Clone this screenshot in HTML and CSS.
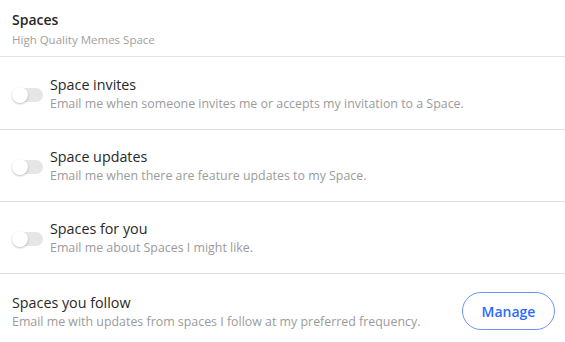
FILE: index.html
```html
<!DOCTYPE html>
<html lang="en">
<head>
    <meta charset="UTF-8">
    <title>Spaces - Email settings</title>
    <link rel="stylesheet" href="styles.css">
</head>
<body>
    <div class="settings">
        <div class="header">
            <div class="title">Spaces</div>
            <div class="subtitle">High Quality Memes Space</div>
        </div>

        <div class="row first">
            <span class="toggle"></span>
            <div class="text">
                <div class="name">Space invites</div>
                <div class="desc">Email me when someone invites me or accepts my invitation to a Space.</div>
            </div>
        </div>

        <div class="row">
            <span class="toggle"></span>
            <div class="text">
                <div class="name">Space updates</div>
                <div class="desc">Email me when there are feature updates to my Space.</div>
            </div>
        </div>

        <div class="row">
            <span class="toggle"></span>
            <div class="text">
                <div class="name">Spaces for you</div>
                <div class="desc">Email me about Spaces I might like.</div>
            </div>
        </div>

        <div class="row last">
            <div class="text">
                <div class="name">Spaces you follow</div>
                <div class="desc">Email me with updates from spaces I follow at my preferred frequency.</div>
            </div>
            <button class="manage">Manage</button>
        </div>
    </div>
</body>
</html>
```

FILE: styles.css
```css
body {
    margin: 0;
    background: #fff;
    font-family: "Open Sans", "Noto Sans", sans-serif;
    color: #282829;
}
.header {
    padding: 10px 12px 8px;
    border-bottom: 1px solid #e2e2e2;
}
.title {
    font-size: 14px;
    line-height: 20px;
    font-weight: 600;
}
.subtitle {
    margin-top: 2px;
    font-size: 11.5px;
    line-height: 16px;
    color: #a0a0a0;
}
.row {
    display: flex;
    align-items: center;
    padding: 17px 10px 17px 12px;
    border-bottom: 1px solid #e2e2e2;
}
.row.first {
    padding-top: 18px;
}
.row.last {
    border-bottom: none;
    padding-top: 18px;
}
.toggle {
    position: relative;
    width: 30px;
    height: 14px;
    margin: 2px 7px 0 1px;
    border-radius: 7px;
    background: #e6e6e6;
    flex-shrink: 0;
}
.toggle::after {
    content: "";
    position: absolute;
    left: -1px;
    top: -1px;
    width: 16px;
    height: 16px;
    border-radius: 50%;
    background: #fff;
    box-shadow: 0 1px 2px rgba(0,0,0,0.25);
}
.text {
    flex: 1;
}
.name {
    font-size: 14.3px;
    line-height: 20px;
}
.desc {
    margin-top: 1px;
    font-size: 12.4px;
    line-height: 16px;
    color: #9b9b9b;
}
.manage {
    width: 93px;
    height: 38px;
    border: 1px solid #6d94f5;
    border-radius: 19px;
    background: #fff;
    color: #2e69ff;
    font-family: inherit;
    font-size: 14px;
    font-weight: 600;
    cursor: pointer;
}
```
